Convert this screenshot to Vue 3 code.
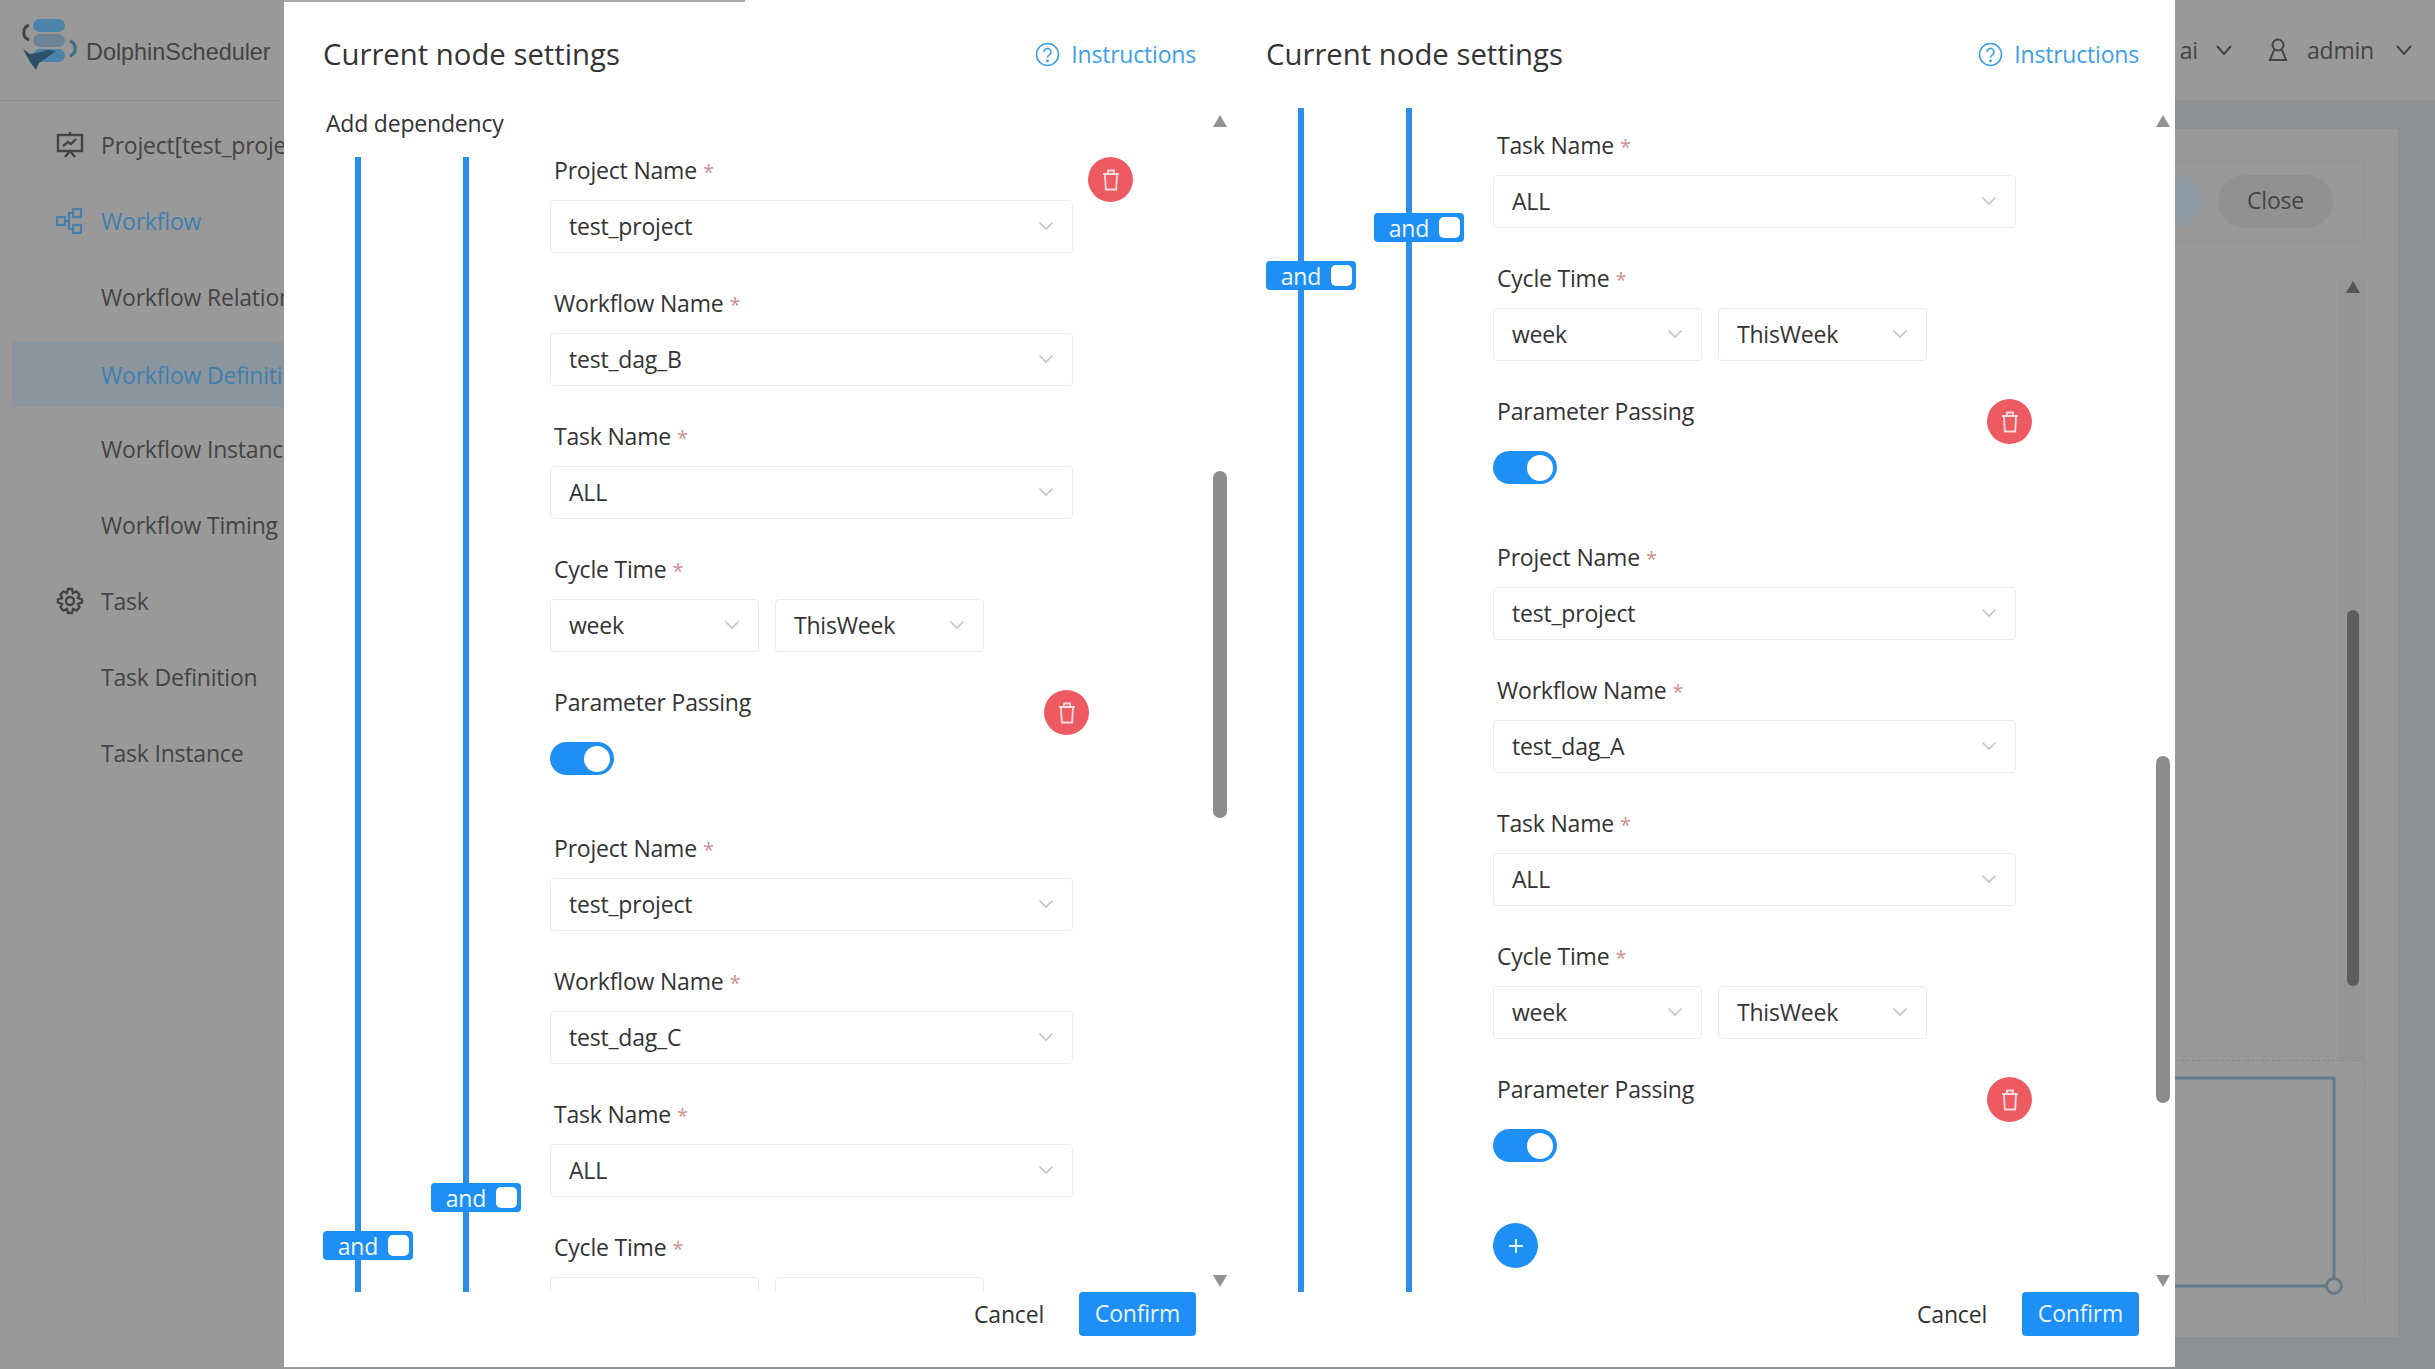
<template>
  <div class="page">
    <header class="topbar">
      <div class="logo">
        <svg width="66" height="58" viewBox="0 0 66 58">
          <rect x="15" y="1" width="32" height="13" rx="6.5" fill="#4b83ab" />
          <rect x="15" y="16" width="32" height="13" rx="6.5" fill="#6d8496" />
          <rect x="15" y="31" width="32" height="13" rx="6.5" fill="#4b83ab" />
          <path d="M5 31l7 5 7-1 11-3 8 1-7 5-4 3-6 4-3 7-6-8z" fill="#2c5068" />
          <path d="M11 7a8 8 0 0 0 0 15" fill="none" stroke="#444" stroke-width="3" />
          <path d="M52 23a8 8 0 0 1 0 15" fill="none" stroke="#3f6a88" stroke-width="3" />
        </svg>
        <span class="logo-text">DolphinScheduler</span>
      </div>
      <div class="user">
        <span>ai</span>
        <svg class="caret" width="16" height="10" viewBox="0 0 16 10"><path d="M1 1l7 8 7-8" /></svg>
        <svg class="user-icon" width="20" height="24" viewBox="0 0 20 24" fill="none" stroke="#444" stroke-width="2">
          <circle cx="10" cy="7" r="5.5" /><path d="M6 12L2 22h16l-4-10" />
        </svg>
        <span>admin</span>
        <svg class="caret" width="16" height="10" viewBox="0 0 16 10"><path d="M1 1l7 8 7-8" /></svg>
      </div>
    </header>

    <div class="main">
      <aside class="sidebar">
        <div v-for="item in menu" :key="item.label" class="menu-item" :class="{ active: item.active, blue: item.blue, sub: !item.icon }">
          <svg v-if="item.icon === 'project'" class="menu-icon" width="28" height="28" viewBox="0 0 28 28" fill="none" stroke="#444" stroke-width="2.4">
            <rect x="2" y="4" width="24" height="16" /><path d="M7 15l5-4 3 2 5-5M14 1v3M9 26l5-6 5 6" />
          </svg>
          <svg v-else-if="item.icon === 'flow'" class="menu-icon" width="28" height="28" viewBox="0 0 28 28" fill="none" stroke="#4b7fa6" stroke-width="2.2">
            <rect x="1" y="10" width="8" height="8" /><rect x="17" y="2" width="8" height="8" /><rect x="17" y="18" width="8" height="8" /><path d="M9 14h4V6h4M13 14v8h4" />
          </svg>
          <svg v-else-if="item.icon === 'gear'" class="menu-icon" width="28" height="28" viewBox="0 0 28 28" fill="none" stroke="#444" stroke-width="2.4">
            <circle cx="14" cy="14" r="4" /><path d="M12 2h4l1 4 3.500-1.500 3 3L22 11l4 1.500v3L22 17l1.500 3.500-3 3L17 22l-1 4h-4l-1-4-3.500 1.500-3-3L6 17l-4-1.500v-3L6 11 4.500 7.500l3-3L11 6z" />
          </svg>
          <span>{{ item.label }}</span>
        </div>
      </aside>

      <section class="content">
        <div class="content-card">
          <div class="toolbar">
            <span class="save-btn"></span>
            <span class="close-btn">Close</span>
          </div>
          <div class="canvas">
            <div class="canvas-dots"></div>
            <span class="canvas-arrow"></span>
            <span class="canvas-thumb"></span>
          </div>
          <div class="canvas-lower"></div>
          <svg class="edge" width="180" height="230" viewBox="0 0 180 230" fill="none" stroke="#667a88">
            <path d="M0 2h161v208H0" stroke-width="3" />
            <circle cx="161" cy="210" r="7.5" fill="#999" stroke-width="3" />
          </svg>
        </div>
      </section>
    </div>

    <div class="modals">
      <div v-for="(panel, p) in panels" :key="p" class="panel" :class="{ second: p === 1 }">
        <span v-if="p === 0" class="top-strip"></span>
        <div class="panel-head">
          <span class="panel-title">Current node settings</span>
          <span class="instructions">
            <svg width="25" height="25" viewBox="0 0 25 25" fill="none" stroke="#3da0e6" stroke-width="1.6">
              <circle cx="12.5" cy="12.5" r="11" />
              <path d="M9 10a3.500 3.500 0 1 1 5.400 2.900c-1.300.8-1.900 1.400-1.900 2.800" />
              <circle cx="12.5" cy="19" r=".6" />
            </svg>
            Instructions
          </span>
        </div>

        <div class="scroller">
          <div v-if="p === 0" class="add-dep">Add dependency</div>
          <div class="tree-body" :class="{ scrolled: p === 1 }">
            <div class="tree">
              <div v-for="(top, i) in panel.badges" :key="i" class="rail">
                <span class="rail-line"></span>
                <span class="badge" :style="{ top: top + 'px' }">and<i class="badge-box"></i></span>
              </div>
            </div>
            <div class="form">
              <div v-for="(item, i) in panel.items" :key="i" class="item" :class="{ 'item-param': item.type === 'param' }">
                <label class="item-label">{{ item.label }}<em v-if="item.type !== 'param'">*</em></label>

                <div v-if="item.type === 'select'" class="select">
                  {{ item.value }}
                  <svg class="chevron" width="16" height="10" viewBox="0 0 16 10"><path d="M1.500 1.500L8 8l6.500-6.500" /></svg>
                </div>

                <div v-else-if="item.type === 'cycle'" class="cycle">
                  <div v-for="v in ['week', 'ThisWeek']" :key="v" class="select half">
                    {{ v }}
                    <svg class="chevron" width="16" height="10" viewBox="0 0 16 10"><path d="M1.500 1.500L8 8l6.500-6.500" /></svg>
                  </div>
                </div>

                <div v-else class="switch-row"><span class="switch"><i></i></span></div>

                <button v-if="item.remove" class="del" :class="{ top: item.type === 'select' }">
                  <svg width="22" height="24" viewBox="0 0 22 24" fill="none" stroke="#f6dcdd" stroke-width="1.8">
                    <path d="M3 6h16M8 5V2.500h6V5M5 6l.8 15.500h10.400L17 6" />
                  </svg>
                </button>
              </div>
              <button v-if="p === 1" class="plus">
                <svg width="20" height="20" viewBox="0 0 20 20" stroke="#dff0ff" stroke-width="2"><path d="M10 3v14M3 10h14" /></svg>
              </button>
            </div>
          </div>
        </div>

        <div class="panel-foot">
          <span class="cancel">Cancel</span>
          <span class="confirm">Confirm</span>
        </div>

        <div class="bar">
          <span class="arrow up"></span>
          <span class="thumb" :class="{ low: p === 1 }"></span>
          <span class="arrow down"></span>
        </div>
      </div>
    </div>
  </div>
</template>

<script setup>
const menu = [
  { label: 'Project[test_project]', icon: 'project' },
  { label: 'Workflow', icon: 'flow', blue: true },
  { label: 'Workflow Relation' },
  { label: 'Workflow Definition', active: true, blue: true },
  { label: 'Workflow Instance' },
  { label: 'Workflow Timing' },
  { label: 'Task', icon: 'gear' },
  { label: 'Task Definition' },
  { label: 'Task Instance' }
]

const sel = (label, value, remove = false) => ({ type: 'select', label, value, remove })
const cycle = { type: 'cycle', label: 'Cycle Time' }
const param = { type: 'param', label: 'Parameter Passing', remove: true }

const panels = [
  {
    badges: [1074, 1026],
    items: [
      sel('Project Name', 'test_project', true),
      sel('Workflow Name', 'test_dag_B'),
      sel('Task Name', 'ALL'),
      cycle,
      param,
      sel('Project Name', 'test_project'),
      sel('Workflow Name', 'test_dag_C'),
      sel('Task Name', 'ALL'),
      cycle
    ]
  },
  {
    badges: [153, 105],
    items: [
      sel('Task Name', 'ALL'),
      cycle,
      param,
      sel('Project Name', 'test_project'),
      sel('Workflow Name', 'test_dag_A'),
      sel('Task Name', 'ALL'),
      cycle,
      param
    ]
  }
]
</script>

<style>
html, body {
  margin: 0;
  overflow: hidden;
  background: #999;
}
</style>

<style scoped>
.page {
  position: relative;
  width: 2435px;
  height: 1369px;
  overflow: hidden;
  background: #999;
  color: #444;
  font-family: "Open Sans", "Liberation Sans", sans-serif;
  font-size: 23px;
  letter-spacing: -0.2px;
}

.topbar {
  display: flex;
  justify-content: space-between;
  align-items: center;
  height: 101px;
  box-sizing: border-box;
  border-bottom: 1px solid #909090;
}

.logo {
  display: flex;
  align-items: center;
  gap: 2px;
  padding: 0 0 6px 18px;
}

.logo-text {
  font-family: "Liberation Sans", sans-serif;
  font-size: 23.4px;
  letter-spacing: 0;
  color: #444;
  margin-top: 10px;
}

.user {
  display: flex;
  align-items: center;
  padding-right: 23px;
}

.caret {
  margin: 0 36px 0 18px;
  fill: none;
  stroke: #444;
  stroke-width: 2;
}

.caret:last-child {
  margin-right: 0;
  margin-left: 22px;
}

.user-icon {
  margin-right: 19px;
}

.main {
  display: flex;
  height: 1268px;
}

.sidebar {
  width: 320px;
  flex: none;
  padding: 6px 0 0 12px;
  box-sizing: border-box;
}

.menu-item {
  display: flex;
  align-items: center;
  gap: 17px;
  height: 76px;
  padding-left: 44px;
  white-space: nowrap;
  overflow: hidden;
}

.menu-item.sub {
  padding-left: 89px;
}

.menu-item.blue {
  color: #3f7fae;
}

.menu-item.active {
  height: 65px;
  margin: 7px 0 4px;
  background: #8b959e;
}

.menu-icon {
  flex: none;
}

.content {
  flex: 1;
  background: #8e9092;
  padding: 28px 37px 32px 0;
  min-width: 0;
}

.content-card {
  position: relative;
  height: 100%;
  background: #999;
  padding: 32px 33px 33px 0;
  box-sizing: border-box;
  display: flex;
  flex-direction: column;
}

.toolbar {
  display: flex;
  justify-content: flex-end;
  align-items: center;
  height: 81px;
  flex: none;
  gap: 16px;
  box-sizing: border-box;
  padding-right: 31px;
  border: 1px solid #929292;
  border-radius: 4px;
}

.save-btn {
  width: 80px;
  height: 53px;
  border-radius: 27px;
  background: #8f9ba5;
}

.close-btn {
  width: 115px;
  height: 53px;
  line-height: 51px;
  text-align: center;
  border-radius: 27px;
  background: #919191;
}

.canvas {
  position: relative;
  flex: 1;
  display: flex;
  background: #999;
}

.canvas-dots {
  flex: 1;
  margin: 38px 0 1px;
  border-right: 26px solid #959595;
  background-image: radial-gradient(circle, #8b8e91 1.4px, transparent 1.8px);
  background-size: 16px 16px;
}

.canvas-arrow {
  position: absolute;
  right: 5px;
  top: 39px;
  border: 7px solid transparent;
  border-top: 0;
  border-bottom: 12px solid #555;
}

.canvas-thumb {
  position: absolute;
  right: 6px;
  top: 368px;
  width: 12px;
  height: 376px;
  border-radius: 6px;
  background: #5b5e61;
}

.canvas-lower {
  flex: none;
  height: 244px;
  box-sizing: border-box;
  border-top: 1px dashed #8c8c8c;
  border-right: 1px dashed #8c8c8c;
  background: #999;
}

.edge {
  position: absolute;
  right: 45px;
  top: 947px;
}

.modals {
  position: absolute;
  top: 0;
  left: 284px;
  display: flex;
}

.panel {
  position: relative;
  width: 943px;
  height: 1367px;
  box-sizing: border-box;
  padding: 0 31px 0 39px;
  background: #fff;
  color: #333;
}

.panel.second {
  width: 948px;
  padding-right: 36px;
}

.top-strip {
  position: absolute;
  top: 0;
  left: 0;
  width: 461px;
  height: 2px;
  background: #a8a8a8;
}

.panel-head {
  display: flex;
  justify-content: space-between;
  align-items: center;
  height: 108px;
}

.panel-title {
  font-size: 29.3px;
  letter-spacing: 0;
}

.instructions {
  display: flex;
  align-items: center;
  gap: 11px;
  color: #3da0e6;
}

.scroller {
  height: 1184px;
  overflow: hidden;
}

.add-dep {
  height: 30px;
  line-height: 30px;
  margin: 0 0 13px 3px;
}

.tree-body {
  display: flex;
  align-items: stretch;
  height: 1200px;
}

.tree {
  display: flex;
  flex: none;
  width: 227px;
  box-sizing: border-box;
  padding: 6px 0 0 32px;
}

.scrolled .tree {
  padding-top: 0;
}

.form {
  flex: 1;
  min-width: 0;
  padding-top: 1px;
}

.scrolled .form {
  padding-top: 19px;
}

.rail {
  position: relative;
  width: 108px;
  flex: none;
}

.rail-line {
  display: block;
  width: 6px;
  height: 100%;
  background: #2a8fe8;
}

.badge {
  position: absolute;
  left: -32px;
  display: flex;
  align-items: center;
  justify-content: flex-end;
  gap: 10px;
  width: 90px;
  height: 29px;
  box-sizing: border-box;
  padding-right: 4px;
  border-radius: 4px;
  background: #1e90f5;
  color: #f0f8ff;
}

.badge-box {
  width: 21px;
  height: 21px;
  border-radius: 5px;
  background: #fff;
}

.item {
  position: relative;
  height: 133px;
}

.item-param {
  height: 146px;
}

.item-label {
  display: block;
  height: 38px;
  line-height: 36px;
  margin: 0 0 10px 4px;
}

.item-label em {
  margin-left: 6px;
  font-size: 20px;
  font-style: normal;
  color: #cf8f92;
}

.select {
  position: relative;
  width: 523px;
  height: 53px;
  line-height: 51px;
  box-sizing: border-box;
  padding-left: 18px;
  border: 1px solid #ececec;
  border-radius: 4px;
  white-space: nowrap;
}

.select.half {
  width: 209px;
}

.cycle {
  display: flex;
  gap: 16px;
}

.chevron {
  position: absolute;
  right: 18px;
  top: 20px;
  fill: none;
  stroke: #c4c4c4;
  stroke-width: 1.6;
}

.switch-row {
  height: 53px;
  display: flex;
  align-items: center;
}

.switch {
  display: flex;
  justify-content: flex-end;
  align-items: center;
  width: 64px;
  height: 33px;
  padding-right: 4px;
  box-sizing: border-box;
  border-radius: 17px;
  background: #1e90f5;
}

.switch i {
  width: 26px;
  height: 26px;
  border-radius: 50%;
  background: #fff;
}

.del,
.plus {
  display: flex;
  align-items: center;
  justify-content: center;
  width: 45px;
  height: 45px;
  padding: 0;
  border: 0;
  border-radius: 50%;
}

.del {
  position: absolute;
  left: 494px;
  top: 6px;
  background: #ee5a62;
}

.del.top {
  left: 538px;
  top: 5px;
}

.plus {
  margin-top: 6px;
  background: #1e90f5;
}

.panel-foot {
  display: flex;
  justify-content: flex-end;
  align-items: center;
  gap: 35px;
  height: 44px;
}

.confirm {
  width: 117px;
  height: 44px;
  line-height: 42px;
  text-align: center;
  border-radius: 4px;
  background: #1e90f5;
  color: #e8f4ff;
}

.bar {
  position: absolute;
  left: 929px;
  top: 115px;
  width: 14px;
  height: 1172px;
}

.thumb {
  position: absolute;
  left: 0;
  top: 356px;
  width: 14px;
  height: 347px;
  border-radius: 7px;
  background: #8a8d90;
}

.thumb.low {
  top: 641px;
}

.arrow {
  position: absolute;
  left: 0;
  border: 7px solid transparent;
}

.arrow.up {
  top: 0;
  border-top: 0;
  border-bottom: 12px solid #909396;
}

.arrow.down {
  bottom: 0;
  border-bottom: 0;
  border-top: 12px solid #909396;
}
</style>
